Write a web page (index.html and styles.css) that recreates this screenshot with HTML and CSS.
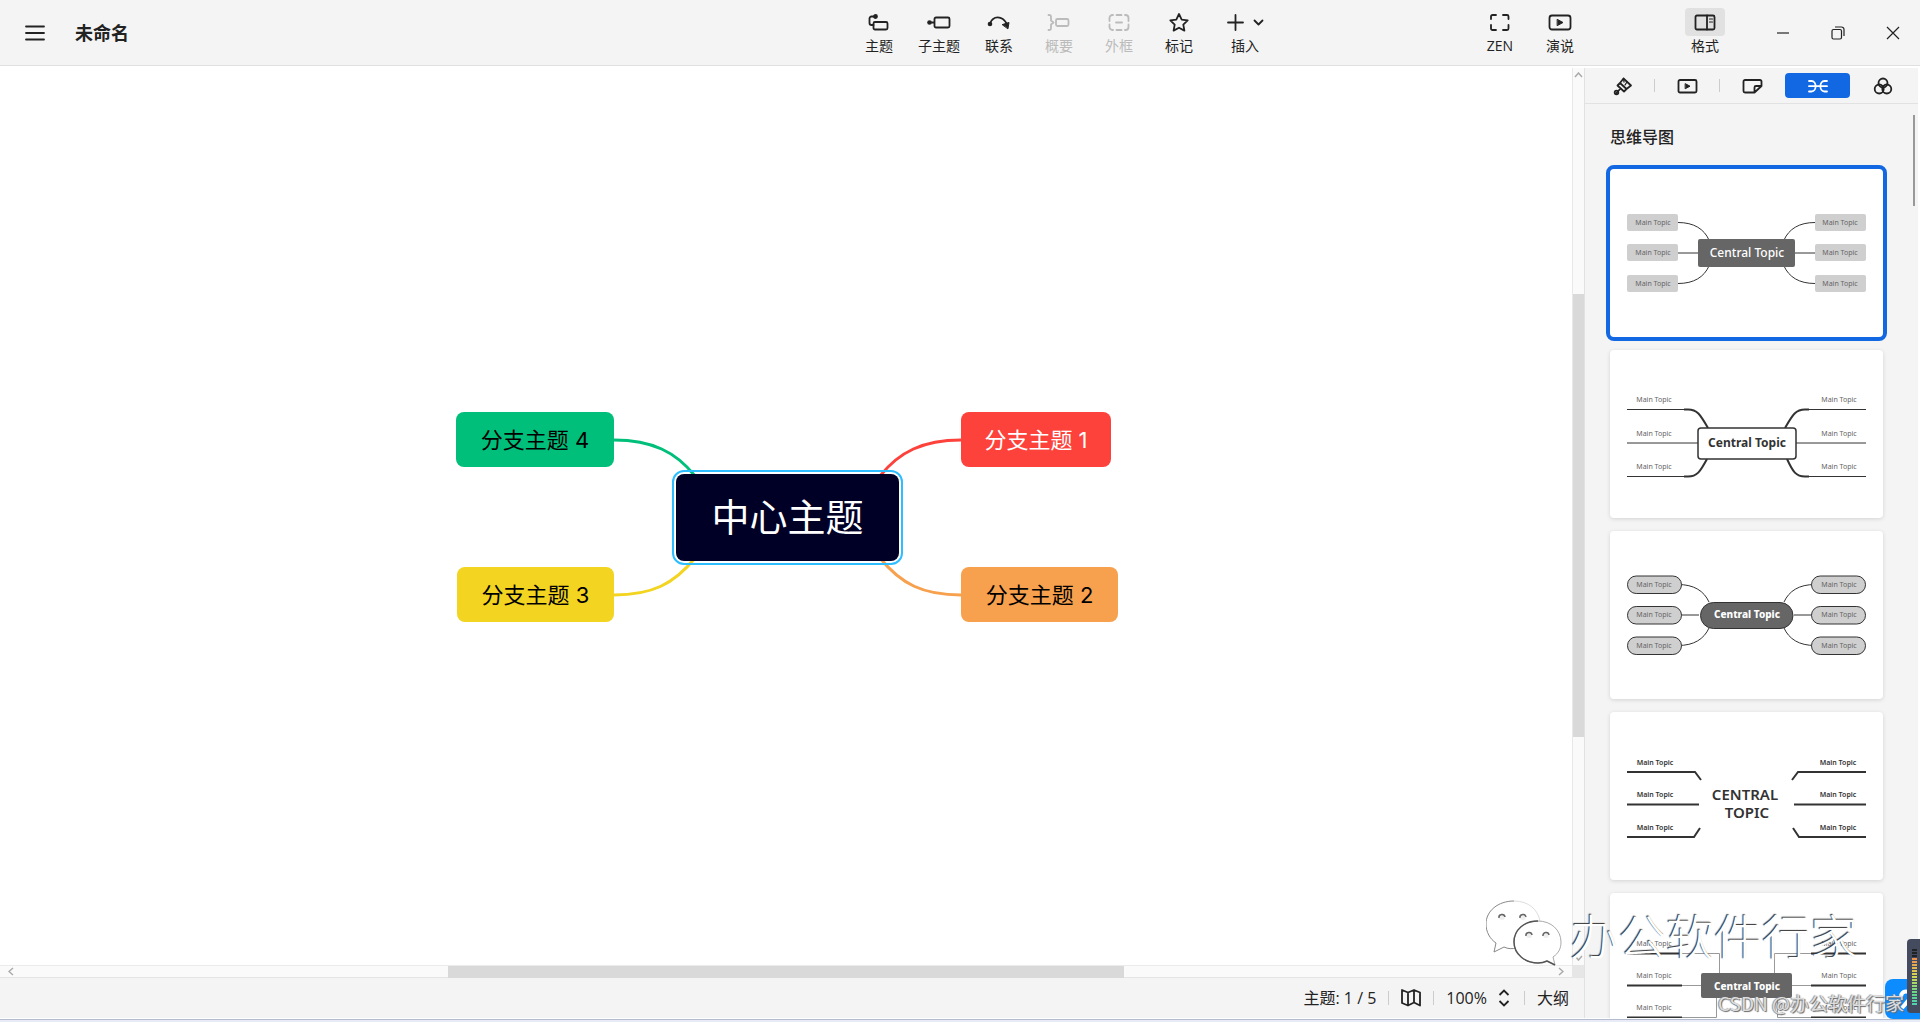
FILE: index.html
```html
<!DOCTYPE html>
<html lang="zh-CN">
<head>
<meta charset="utf-8">
<title>未命名</title>
<link rel="stylesheet" href="styles.css">
</head>
<body>
<svg class="defs" aria-hidden="true">
  <defs>
    <g id="card-curves" fill="none" stroke="#333">
      <path d="M68 53.500C84 53.500 94 60 99 71M68 114.500C84 114.500 94 108 99 97M205 53.500C189 53.500 179 60 174 71M205 114.500C189 114.500 179 108 174 97"/>
      <path d="M68 84H89M184 84H205"/>
    </g>
  </defs>
</svg>

<header class="topbar">
  <div class="doc">
    <button class="plain menu" aria-label="菜单"><svg width="20" height="16" viewBox="0 0 20 16"><path d="M1 1.500H19M1 8H19M1 14.500H19" stroke="#222" stroke-width="1.800" stroke-linecap="round"/></svg></button>
    <h1>未命名</h1>
  </div>
  <nav class="tools">
    <button class="tool"><svg class="ico" viewBox="0 0 24 24"><rect x="6.500" y="12" width="14" height="7.500" rx="1.500"/><path d="M8 6.500H4.500a2 2 0 0 0-2 2V13a2 2 0 0 0 2 2H6.500"/><circle cx="8.500" cy="6.500" r="1.500" fill="currentColor"/></svg><span>主题</span></button>
    <button class="tool"><svg class="ico" viewBox="0 0 24 24"><rect x="7.500" y="7.500" width="15" height="10" rx="1.500"/><path d="M2 12.500H7"/><circle cx="2.500" cy="12.500" r="2.300" fill="currentColor" stroke="none"/></svg><span>子主题</span></button>
    <button class="tool"><svg class="ico" viewBox="0 0 24 24"><path d="M3 13.500C6 5.500 15 5 20 14"/><circle cx="3" cy="14" r="2.300" fill="currentColor" stroke="none"/><path d="M15.500 14.500L22 12.500L21 18.500Z" fill="currentColor" stroke-width="1"/></svg><span>联系</span></button>
    <button class="tool" disabled><svg class="ico" viewBox="0 0 24 24"><path d="M1.500 5C4 5 4 5.500 4 8V10.500L6.500 12.500L4 14.500V17C4 19.500 4 20 1.500 20"/><rect x="9" y="9" width="12.500" height="7" rx="1.500"/></svg><span>概要</span></button>
    <button class="tool" disabled><svg class="ico" viewBox="0 0 24 24"><path d="M2.500 11V8a3 3 0 0 1 3-3H6M9.500 5h5M18 5h.5a3 3 0 0 1 3 3v3M21.500 14.500V17a3 3 0 0 1-3 3H18M14.500 20h-5M6 20h-.5a3 3 0 0 1-3-3v-2.500M9 12.500h6"/></svg><span>外框</span></button>
    <button class="tool"><svg class="ico" viewBox="0 0 24 24"><path d="M12 4l2.700 5.600 6 .8-4.400 4.200 1.100 6L12 17.700 6.600 20.600l1.100-6L3.300 10.400l6-.8Z"/></svg><span>标记</span></button>
    <button class="tool wide"><svg class="ico wide" viewBox="0 0 40 24"><path d="M3 12.500H18M10.500 5V20M29.500 10.500l4 4 4-4"/></svg><span>插入</span></button>
  </nav>
  <nav class="views">
    <button class="tool"><svg class="ico" viewBox="0 0 24 24"><path d="M3 9V6.500A1.500 1.500 0 0 1 4.500 5H8M15 5h4A1.500 1.500 0 0 1 20.500 6.500V9M20.500 15V18.500A1.500 1.500 0 0 1 19 20H15M8 20H4.500A1.500 1.500 0 0 1 3 18.500V15"/></svg><span>ZEN</span></button>
    <button class="tool"><svg class="ico" viewBox="0 0 24 24"><rect x="1.500" y="5.500" width="21" height="14" rx="2.500"/><path d="M9.500 9.500L15 12.500L9.500 15.500Z" fill="currentColor" stroke-width="1"/></svg><span>演说</span></button>
  </nav>
  <button class="tool format"><svg class="ico" viewBox="0 0 24 24"><rect x="2.500" y="5.500" width="19" height="14" rx="1.500"/><path d="M14 5.500V19.500"/><path d="M16.500 9h3M16.500 12h3" stroke-width="1.200"/></svg><span>格式</span></button>
  <div class="window">
    <button class="plain" aria-label="最小化"><svg width="14" height="14" viewBox="0 0 14 14"><path d="M1 7H13"/></svg></button>
    <button class="plain" aria-label="还原"><svg width="14" height="14" viewBox="0 0 14 14"><rect x="1" y="3.500" width="9.500" height="9.500" rx="1.500"/><path d="M4 1H10.500A2.500 2.500 0 0 1 13 3.500V10"/></svg></button>
    <button class="plain" aria-label="关闭"><svg width="14" height="14" viewBox="0 0 14 14"><path d="M1 1L13 13M13 1L1 13"/></svg></button>
  </div>
</header>

<main class="workspace">
  <section class="editor">
    <div class="canvas">
      <div class="map">
        <svg class="links" viewBox="0 0 662 211" fill="none" stroke-width="3">
          <path d="M158 28C196 28 220 40 239 64" stroke="#00bf7b"/>
          <path d="M158 183C196 183 218 172 239 146" stroke="#f2d421"/>
          <path d="M505 28C467 28 443 40 424 64" stroke="#fd423c"/>
          <path d="M505 183C467 183 445 172 424 146" stroke="#f7a04d"/>
        </svg>
        <div class="node n4">分支主题 4</div>
        <div class="node n3">分支主题 3</div>
        <div class="node n1">分支主题 1</div>
        <div class="node n2">分支主题 2</div>
        <div class="central">中心主题</div>
      </div>
    </div>
    <div class="vbar"><svg width="9" height="6" viewBox="0 0 9 6"><path d="M1 5L4.500 1L8 5"/></svg><i class="before"></i><i class="thumb"></i><i class="after"></i><svg width="9" height="6" viewBox="0 0 9 6"><path d="M1 1L4.500 5L8 1"/></svg></div>
    <div class="hbar"><svg width="6" height="9" viewBox="0 0 6 9"><path d="M5 1L1 4.500L5 8"/></svg><i class="before"></i><i class="thumb"></i><i class="after"></i><svg width="6" height="9" viewBox="0 0 6 9"><path d="M1 1L5 4.500L1 8"/></svg></div>
    <div class="corner"></div>
    <footer class="status">
      <span>主题: 1 / 5</span>
      <i class="sep"></i>
      <button class="plain" aria-label="导航图"><svg width="20" height="18" viewBox="0 0 20 18"><path d="M1 1L7 3.500L13 1L19 3.500V16.500L13 13.500L7 16.500L1 14ZM7 3.500V16.500M13 1V13.500" stroke-linejoin="round"/></svg></button>
      <i class="sep"></i>
      <button class="plain zoom"><span>100%</span><svg width="12" height="18" viewBox="0 0 12 18"><path d="M1.500 6L6 1.500L10.500 6M1.500 12L6 16.500L10.500 12"/></svg></button>
      <i class="sep"></i>
      <button class="plain">大纲</button>
    </footer>
  </section>

  <aside class="panel">
    <nav class="tabs">
      <button class="plain tab" aria-label="样式"><svg class="ico" viewBox="0 0 24 24"><path d="M12.500 4.500L20 11.500L15.500 15L9 9Z M9 9L6.500 11.500L13 17.500L15.500 15M9.500 14.500L5 19.500" /><path d="M12.500 4.500L13 8M16 8L14 11" stroke-width="1.300"/><circle cx="5.500" cy="18.500" r="1.800"/></svg></button>
      <button class="plain tab" aria-label="演说"><svg class="ico" viewBox="0 0 24 24"><rect x="2.500" y="6" width="18" height="12.500" rx="1.500"/><path d="M9.500 9.800L14 12.200L9.500 14.600Z" fill="currentColor" stroke-width="1"/></svg></button>
      <button class="plain tab" aria-label="画布"><svg class="ico" viewBox="0 0 24 24"><path d="M20.500 12V7.500A1.500 1.500 0 0 0 19 6H4A1.500 1.500 0 0 0 2.500 7.500V17A1.500 1.500 0 0 0 4 18.500H13.500L20.500 12H15A1.500 1.500 0 0 0 13.500 13.500V18.500"/></svg></button>
      <button class="plain tab active" aria-label="骨架"><svg class="ico" viewBox="0 0 24 24"><path d="M3 7H5.500C11 7 11 17.500 5.500 17.500H3M21 7H18.500C13 7 13 17.500 18.500 17.500H21M3 12.200H21"/></svg></button>
      <button class="plain tab" aria-label="配色"><svg class="ico" viewBox="0 0 24 24"><circle cx="12" cy="9" r="4.500"/><circle cx="8.200" cy="15" r="4.500"/><circle cx="15.800" cy="15" r="4.500"/></svg></button>
    </nav>
    <div class="gallery">
      <h2>思维导图</h2>
      <button class="card selected"><svg viewBox="0 0 273 168">
        <use href="#card-curves"/>
        <g fill="#cfcfcf"><rect x="17" y="45" width="51" height="17" rx="2"/><rect x="17" y="75" width="51" height="17" rx="2"/><rect x="17" y="106" width="51" height="17" rx="2"/><rect x="205" y="45" width="51" height="17" rx="2"/><rect x="205" y="75" width="51" height="17" rx="2"/><rect x="205" y="106" width="51" height="17" rx="2"/></g>
        <rect x="88" y="70" width="97" height="28" rx="2" fill="#666"/>
        <g class="t"><text x="43" y="56">Main Topic</text><text x="43" y="86">Main Topic</text><text x="43" y="117">Main Topic</text><text x="230" y="56">Main Topic</text><text x="230" y="86">Main Topic</text><text x="230" y="117">Main Topic</text></g>
        <text class="c medium" x="137" y="88">Central Topic</text>
      </svg></button>
      <button class="card"><svg viewBox="0 0 273 168">
        <g fill="none" stroke="#333"><path d="M17 59.500H76M17 93H88M17 126.500H76M256 59.500H197M256 93H185M256 126.500H197"/><path d="M74 59.500H78C87 59.500 90 64 98 78M74 126.500H78C87 126.500 90 122 97 109M199 59.500H195C186 59.500 183 64 175 78M199 126.500H195C186 126.500 183 122 177 109" stroke-width="2"/></g>
        <rect x="88" y="78" width="98" height="31" rx="3" fill="#fff" stroke="#333" stroke-width="1.500"/>
        <g class="t"><text x="44" y="52">Main Topic</text><text x="44" y="86">Main Topic</text><text x="44" y="119">Main Topic</text><text x="229" y="52">Main Topic</text><text x="229" y="86">Main Topic</text><text x="229" y="119">Main Topic</text></g>
        <text class="c dark" x="137" y="97">Central Topic</text>
      </svg></button>
      <button class="card"><svg viewBox="0 0 273 168">
        <use href="#card-curves"/>
        <g fill="#cfcfcf" stroke="#333"><rect x="17.500" y="45" width="54" height="17.500" rx="8.700"/><rect x="17.500" y="75.500" width="54" height="17.500" rx="8.700"/><rect x="17.500" y="106" width="54" height="17.500" rx="8.700"/><rect x="201.500" y="45" width="54" height="17.500" rx="8.700"/><rect x="201.500" y="75.500" width="54" height="17.500" rx="8.700"/><rect x="201.500" y="106" width="54" height="17.500" rx="8.700"/><rect x="90.500" y="71.500" width="92.500" height="26" rx="13" fill="#666"/></g>
        <g class="t"><text x="44" y="56">Main Topic</text><text x="44" y="86">Main Topic</text><text x="44" y="117">Main Topic</text><text x="229" y="56">Main Topic</text><text x="229" y="86">Main Topic</text><text x="229" y="117">Main Topic</text></g>
        <text class="c small" x="137" y="87">Central Topic</text>
      </svg></button>
      <button class="card"><svg viewBox="0 0 273 168">
        <g fill="none" stroke="#333" stroke-width="2"><path d="M17 60H85L91 68M17 92.500H89M17 125H84L90 116M256 60H188L182 68M256 92.500H184M256 125H189L183 116"/></g>
        <g class="t bold"><text x="45" y="53">Main Topic</text><text x="45" y="85">Main Topic</text><text x="45" y="118">Main Topic</text><text x="228" y="53">Main Topic</text><text x="228" y="85">Main Topic</text><text x="228" y="118">Main Topic</text></g>
        <text class="c dark large" x="135" y="88">CENTRAL</text><text class="c dark large" x="137" y="106">TOPIC</text>
      </svg></button>
      <button class="card"><svg viewBox="0 0 273 168">
        <path d="M72 60.500H109.500V80M72 92.500H91M72 124.500H106.500V105M201 60.500H164.500V80M201 92.500H182M201 124.500H167.500V105" fill="none" stroke="#999"/>
        <path d="M17 60.500H72M17 92.500H72M17 124.500H72M201 60.500H256M201 92.500H256M201 124.500H256" stroke="#333" stroke-width="2"/>
        <rect x="91" y="80" width="91" height="25" rx="2" fill="#666"/>
        <g class="t"><text x="44" y="53">Main Topic</text><text x="44" y="85">Main Topic</text><text x="44" y="117">Main Topic</text><text x="229" y="53">Main Topic</text><text x="229" y="85">Main Topic</text><text x="229" y="117">Main Topic</text></g>
        <text class="c small" x="137" y="97">Central Topic</text>
      </svg></button>
    </div>
    <i class="scroll"></i>
  </aside>
</main>
<div class="edge"></div>

<div class="brand">
  <svg width="80" height="68" viewBox="0 0 80 68" fill="#fff" stroke-linejoin="round">
    <path d="M28 1C12 1 0 11 0 24C0 32 4 39 10 43L8 52L18 47C22 49 26 49 31 48C36 40 40 28 54 21C52 10 43 1 28 1Z"/>
    <path d="M28 1C12 1 0 11 0 24C0 32 4 39 10 43L8 52L18 47C22 49 26 49 31 48" fill="none" stroke="#888"/>
    <path d="M28 1C43 1 52 10 54 21" fill="none" stroke="#ddd"/>
    <path d="M52 21C38 21 28 30 28 42C28 54 39 63 52 63C56 63 59 62 61 61L69 65L67 57C73 53 75 48 75 42C75 30 65 21 52 21Z" stroke="#aaa"/>
    <path d="M52 21C38 21 28 30 28 42C28 54 39 63 52 63C56 63 59 62 61 61L69 65" fill="none" stroke="#555" stroke-width="1.500"/>
    <g fill="#eee" stroke="none"><circle cx="16" cy="17" r="3"/><circle cx="37" cy="17" r="3"/><circle cx="43" cy="35" r="3"/><circle cx="60" cy="35" r="3"/></g>
    <path d="M13 18a3 3 0 0 1 6-1M34 18a3 3 0 0 1 6-1M40 36a3 3 0 0 1 6-1M57 36a3 3 0 0 1 6-1" fill="none" stroke="#666" stroke-width="1.500"/>
  </svg>
  <span>办公软件行家</span>
</div>
<div class="float"><svg width="35" height="40" viewBox="0 0 35 40" fill="none" stroke="#fff" stroke-width="4"><path d="M16 17a5 5 0 1 1 7 5L17 29M14 21l-2 3"/></svg></div>
<div class="meter"><i></i></div>
<div class="credit">CSDN @办公软件行家</div>
</body>
</html>
```
FILE: styles.css
```css
* { box-sizing: border-box; }
html, body { height: 100%; }
body {
  margin: 0;
  position: relative;
  display: flex;
  flex-direction: column;
  overflow: hidden;
  background: #fff;
  color: #222;
  font: 16px/24px "Open Sans", "Noto Sans CJK SC", sans-serif;
}
h1, h2 { margin: 0; }
button { font: inherit; color: inherit; border: 0; padding: 0; background: none; }
svg { display: block; flex: none; }
.defs { position: absolute; width: 0; height: 0; }
.plain { display: flex; align-items: center; justify-content: center; }

.topbar {
  flex: none;
  display: flex;
  height: 66px;
  background: #f4f4f4;
  border-bottom: 1px solid #e0e0e0;
}
.doc { flex: 1; display: flex; align-items: center; gap: 30px; padding-left: 25px; }
.doc h1 { font-size: 18px; line-height: 24px; font-weight: 700; }
.tools, .views, .window { display: flex; }
.views { margin-left: 189px; }
.format { margin: 0 20px 0 85px; }
.tool {
  width: 60px;
  display: flex;
  flex-direction: column;
  align-items: center;
  padding-top: 8px;
  font-size: 14px;
  line-height: 20px;
}
.tool.wide { width: 72px; }
.tool:disabled { color: #bbb; }
.tool .ico { height: 28px; width: 40px; padding: 2px 8px; border-radius: 4px; }
.tool .ico.wide { padding: 2px 0; }
.tool.format .ico { background: #e1e1e1; }
.ico {
  width: 24px;
  height: 24px;
  fill: none;
  stroke: currentColor;
  stroke-width: 1.8;
  stroke-linecap: round;
  stroke-linejoin: round;
}
.window .plain { width: 55px; height: 65px; }
.window svg { fill: none; stroke: #222; stroke-width: 1.2; }

.workspace { flex: 1; min-height: 0; display: flex; padding: 2px 2px 0 0; }
.editor {
  flex: 1;
  display: grid;
  grid-template-columns: 1fr 12px;
  grid-template-rows: 1fr 13px 40px;
}
.canvas { display: flex; align-items: center; justify-content: center; min-height: 0; padding: 2px 0 0 2px; overflow: hidden; }
.map { position: relative; width: 662px; height: 211px; }
.links { width: 662px; height: 211px; }
.node, .central { position: absolute; display: flex; align-items: center; justify-content: center; white-space: nowrap; }
.node {
  height: 55px;
  border-radius: 8px;
  color: #000;
  font: 22px/32px Inter, "Noto Sans CJK SC", sans-serif;
}
.n4 { left: 0; top: 0; width: 158px; background: #00bf7b; }
.n3 { left: 1px; top: 155px; width: 157px; background: #f2d421; }
.n1 { left: 505px; top: 0; width: 150px; background: #fd423c; color: #fff; }
.n2 { left: 505px; top: 155px; width: 157px; background: #f7a04d; }
.central {
  left: 220px;
  top: 62px;
  width: 223px;
  height: 87px;
  padding-bottom: 6px;
  border-radius: 8px;
  background: #000026;
  color: #fff;
  font: 38px/56px "Noto Sans CJK SC", sans-serif;
  outline: 2px solid #2ebdff;
  outline-offset: 2px;
}

.vbar, .hbar { display: flex; align-items: center; background: #fafafa; }
.vbar { flex-direction: column; padding: 4px 0; border-left: 1px solid #e8e8e8; }
.hbar { padding: 0 8px; border-top: 1px solid #ebebeb; border-bottom: 1px solid #e4e4e4; }
.vbar svg, .hbar svg { fill: none; stroke: #aaa; stroke-width: 1.5; }
.thumb { background: #d9d9d9; }
.vbar .thumb { width: 12px; flex: 443; }
.vbar .before { flex: 216; }
.vbar .after { flex: 218; }
.hbar .thumb { height: 12px; flex: 676; }
.hbar .before { flex: 434; }
.hbar .after { flex: 434; }
.corner { background: #e6e6e6; }
.status {
  grid-column: 1 / -1;
  display: flex;
  align-items: center;
  justify-content: flex-end;
  gap: 12px;
  padding-right: 15px;
  background: #f4f4f4;
}
.status svg { fill: none; stroke: #222; stroke-width: 1.8; }
.sep { width: 1px; height: 14px; background: #ccc; }
.zoom { gap: 11px; padding-right: 2px; }

.panel {
  position: relative;
  width: 334px;
  display: flex;
  flex-direction: column;
  background: #f4f4f4;
  border-left: 1px solid #e2e2e2;
}
.tabs { flex: none; display: flex; height: 36px; padding: 0 3px 0 5px; border-bottom: 1px solid #e2e2e2; }
.tab { position: relative; flex: 1; height: 25px; margin-top: 5px; border-radius: 4px; }
.tab:nth-child(-n+2)::after { content: ""; position: absolute; right: 0; top: 6px; width: 1px; height: 13px; background: #ccc; }
.tab.active { background: #1267e2; color: #fff; }
.gallery {
  flex: 1;
  min-height: 0;
  overflow: hidden;
  display: flex;
  flex-direction: column;
  gap: 13px;
  padding: 21px 35px 0 25px;
}
.gallery h2 { font-size: 16px; line-height: 24px; font-weight: 500; margin-bottom: 7px; }
.card { flex: none; border-radius: 4px; background: #fff; box-shadow: 0 1px 4px #0002; }
.card svg { width: 100%; height: auto; }
.card.selected { outline: 4px solid #1267e2; box-shadow: none; }
.t { font: 7px "Noto Sans", sans-serif; fill: #666; text-anchor: middle; }
.t.bold { font-weight: 600; fill: #333; }
.c { font: 700 12px "Noto Sans", sans-serif; fill: #fff; text-anchor: middle; }
.c.medium { font-weight: 500; }
.c.dark { fill: #333; }
.c.small { font-size: 10px; font-weight: 800; }
.c.large { font-size: 15px; font-weight: 600; }
.scroll { position: absolute; right: 3px; top: 47px; width: 2px; height: 91px; background: #999; }
.edge { flex: none; height: 4px; background: #e8ecf6; border-top: 1px solid #fff; box-shadow: inset 0 1px #b4bccb; }

.brand {
  position: absolute;
  right: 62px;
  bottom: 54px;
  display: flex;
  align-items: center;
  gap: 4px;
  color: #fff;
  font: 300 48px/68px "Noto Sans CJK SC", sans-serif;
  text-shadow: -1px -1px 1px #333;
}
.float { position: absolute; right: 0; bottom: 3px; width: 35px; height: 40px; border-radius: 8px 0 0 8px; background: #0d8cff; }
.meter {
  position: absolute;
  right: 0;
  bottom: 9px;
  width: 13px;
  height: 74px;
  padding: 9px 3px 8px 5px;
  border-radius: 4px 0 0 4px;
  background: #454b5e;
}
.meter i {
  display: block;
  height: 57px;
  background:
    repeating-linear-gradient(#454b5e 0 1px, transparent 1px 3px),
    linear-gradient(#222 0 9px, #f08a4b 9px, #d8d850 28px, #5fd68a 46px, #4fd0b0);
}
.credit {
  position: absolute;
  right: 16px;
  bottom: 6px;
  color: #ddd;
  font: 19px/26px "Noto Sans CJK SC", sans-serif;
  text-shadow: 1px 1px 1px #666, -1px 0 1px #888;
}
```
